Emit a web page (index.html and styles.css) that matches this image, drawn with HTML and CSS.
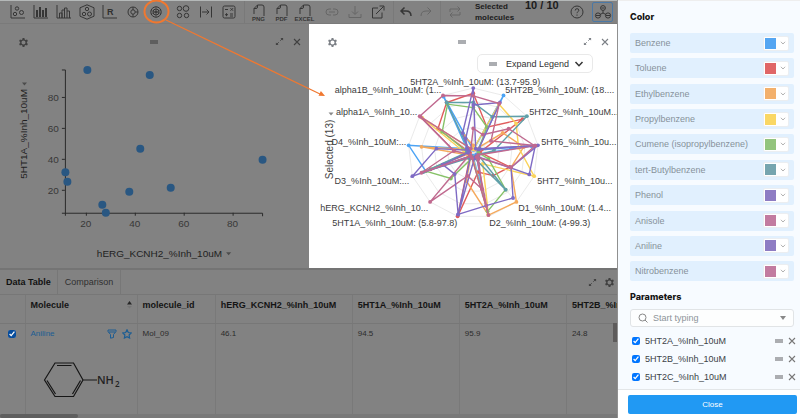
FILE: index.html
```html
<!DOCTYPE html>
<html lang="en">
<head>
<meta charset="utf-8">
<title>Molecule analysis</title>
<link rel="stylesheet" href="styles.css">
</head>
<body>
<svg class="defs" width="0" height="0" aria-hidden="true">
  <symbol id="gear" viewBox="0 0 12 12"><path fill-rule="evenodd" fill="currentColor" d="M4.800 0h2.400l.4 1.900 1.200.7 1.900-.6 1.200 2-1.400 1.300v1.400l1.400 1.300-1.200 2-1.900-.6-1.200.7-.4 1.900H4.800l-.4-1.900-1.200-.7-1.900.6-1.200-2 1.400-1.300V5.300L.1 4l1.200-2 1.900.6 1.200-.7zM6 3.300a2.700 2.700 0 1 0 0 5.400 2.700 2.700 0 1 0 0-5.400z"/></symbol>
  <symbol id="expand" viewBox="0 0 10 10"><path d="M5.800 4.200L8.500 1.500M4.200 5.800L1.500 8.500" stroke="currentColor" stroke-width="1"/><path d="M6 1h3v3zM1 6v3h3z" fill="currentColor"/></symbol>
  <symbol id="close" viewBox="0 0 10 10"><path d="M2 2l6 6M8 2L2 8" stroke="currentColor" stroke-width="1.100"/></symbol>
  <symbol id="chevron" viewBox="0 0 10 10"><path d="M1.500 3L5 6.700 8.500 3" fill="none" stroke="currentColor" stroke-width="1.500"/></symbol>
  <symbol id="file" viewBox="0 0 22 12"><path d="M6 10V4.500L9.500 1H14q2 0 2 2v9M9.500 1v2q0 1.500-1.500 1.500H6" fill="none" stroke="currentColor"/></symbol>
</svg>
<div class="app">
  <main class="workspace">
    <header class="toolbar">
      <button class="tool" aria-label="Scatter plot"><svg width="18" height="16" viewBox="0 0 18 16"><path d="M2 1v13h14"/><circle cx="6" cy="10" r="1.700"/><circle cx="8" cy="4.500" r="1.700"/><circle cx="12.500" cy="8.500" r="2"/></svg></button>
      <button class="tool" aria-label="Bar chart"><svg width="18" height="16" viewBox="0 0 18 16"><path d="M2 1v13h14"/><path d="M5 13V6M8 13V3M11 13V6M14 13V4" stroke-width="2"/></svg></button>
      <button class="tool" aria-label="Histogram"><svg width="18" height="16" viewBox="0 0 18 16"><path d="M2 1v13h14M4.500 14V9h2.500v5M7 14V6h2.500v8M9.500 6V4H12v10M12 7h2.500v7"/></svg></button>
      <button class="tool" aria-label="Hexagonal plot"><svg width="18" height="16" viewBox="0 0 18 16"><path d="M9 .8l7 3v8.400l-7 3-7-3V3.800z"/><circle cx="9" cy="5" r="1.700"/><circle cx="6" cy="10" r="1.700"/><circle cx="11.500" cy="10" r="2"/></svg></button>
      <button class="tool" aria-label="R group"><svg width="18" height="16" viewBox="0 0 18 16"><path d="M2 1v13h14"/><text x="6" y="11" class="r-glyph">R</text></svg></button>
      <button class="tool" aria-label="Donut chart"><svg width="16" height="16" viewBox="0 0 16 16"><circle cx="8" cy="8" r="5"/><circle cx="8" cy="8" r="2.200"/><path d="M8 3v3M8 10v3M10.200 8H13"/></svg></button>
      <button class="tool" aria-label="Radar chart"><svg width="16" height="16" viewBox="0 0 16 16"><circle cx="8" cy="8" r="5.200"/><circle cx="8" cy="8" r="3"/><circle cx="8" cy="8" r="1"/><path d="M8 2.500v11M2.800 6.500l10.400 3M2.800 10l10.400-4" stroke-width=".5"/></svg></button>
      <button class="tool after-gap" aria-label="Clusters"><svg width="16" height="16" viewBox="0 0 16 16"><circle cx="4.500" cy="4.500" r="2.200"/><circle cx="11" cy="4.500" r="2.800"/><circle cx="4.500" cy="11.500" r="2.200"/><circle cx="11.500" cy="11.500" r="2.200"/></svg></button>
      <button class="tool" aria-label="Fit width"><svg width="16" height="16" viewBox="0 0 16 16"><path d="M2.500 2.500v11M13.500 2.500v11M4 8h7M8.500 5.500L11 8l-2.500 2.500"/></svg></button>
      <button class="tool" aria-label="Calculator"><svg width="16" height="16" viewBox="0 0 16 16"><rect x="2" y="2" width="12" height="12" rx="1.500"/><path d="M4 5.500h3M9.500 4.200l2.500 2.500M12 4.200L9.500 6.700M4 10.700h3M5.500 9.200v3M9 10h3M9 12h3"/></svg></button>
      <span class="divider"></span>
      <button class="tool export"><svg width="22" height="12"><use href="#file"/></svg><span>PNG</span></button>
      <button class="tool export"><svg width="22" height="12"><use href="#file"/></svg><span>PDF</span></button>
      <button class="tool export"><svg width="22" height="12"><use href="#file"/></svg><span>EXCEL</span></button>
      <button class="tool muted after-gap" aria-label="Link"><svg width="16" height="16" viewBox="0 0 16 16"><path d="M7 5H5a3 3 0 0 0 0 6h2M9 5h2a3 3 0 0 1 0 6H9M5 8h6"/></svg></button>
      <button class="tool muted" aria-label="Download"><svg width="16" height="16" viewBox="0 0 16 16"><path d="M2 10v3.500h12V10M8 2v8M5 7.500L8 10.500l3-3"/></svg></button>
      <button class="tool" aria-label="Open in new window"><svg width="16" height="16" viewBox="0 0 16 16"><path d="M8 4H2.500v10H12V8.500M6 10l7.500-7.500M9.500 2H14v4.500"/></svg></button>
      <span class="divider"></span>
      <button class="tool narrow" aria-label="Undo"><svg width="14" height="16" viewBox="0 0 14 16"><path d="M12 12q0-5-5-5H2.500M5.500 3.500L2 7l3.500 3.500" stroke-width="1.500"/></svg></button>
      <button class="tool narrow muted" aria-label="Redo"><svg width="14" height="16" viewBox="0 0 14 16"><path d="M2 12q0-5 5-5h4.500M8.500 3.500L12 7l-3.500 3.500"/></svg></button>
      <span class="divider"></span>
      <button class="tool muted" aria-label="Reset"><svg width="14" height="16" viewBox="0 0 14 16"><path d="M2 8V5h10M9.500 2.500L12 5 9.500 7.500M12 8v3H2M4.500 8.500L2 11l2.500 2.500"/></svg></button>
      <div class="selection"><span class="selection-label">Selected molecules</span><strong>10 / 10</strong></div>
      <button class="tool" aria-label="Help"><svg width="14" height="14" viewBox="0 0 14 14"><circle cx="7" cy="7" r="6"/><path d="M5.200 5.500q0-1.800 1.800-1.800t1.800 1.600q0 1-1 1.500-.8.400-.8 1.400M7 9.500v1.200"/></svg></button>
      <button class="tool boxed" aria-label="Molecule colors"><svg width="18" height="16" viewBox="0 0 18 16"><circle cx="9" cy="4" r="2.400"/><circle cx="4" cy="11.500" r="2.600"/><circle cx="14" cy="11.500" r="2.600"/><path d="M9 6.500V9l-3 1.500M9 9l3 1.500M7.500 4h3M2 11.500h4M12 11.500h4"/></svg></button>
    </header>

    <div class="plots">
      <section class="panel">
        <div class="panel-bar">
          <button class="icon" aria-label="Settings"><svg width="9" height="9"><use href="#gear"/></svg></button>
          <span class="grip"></span>
          <span class="bar-end"><button class="icon" aria-label="Expand"><svg width="9" height="9"><use href="#expand"/></svg></button><button class="icon" aria-label="Close"><svg width="10" height="10"><use href="#close"/></svg></button></span>
        </div>
        <svg class="chart" viewBox="0 60 309 208">
          <g class="axis"><path d="M62 70h3.500V216M62 213.500H263v3M62 97.500h3M62 128.500h3M62 159.500h3M62 190.500h3M86.500 213v3M135.500 213v3M184.500 213v3M233.500 213v3"/></g>
          <g class="ticks y"><text x="59" y="101">80</text><text x="59" y="132">60</text><text x="59" y="163">40</text><text x="59" y="194">20</text></g>
          <g class="ticks x"><text x="86" y="227">20</text><text x="135" y="227">40</text><text x="184" y="227">60</text><text x="233" y="227">80</text></g>
          <g class="dots"><circle cx="87.500" cy="70" r="4"/><circle cx="150" cy="75" r="4"/><circle cx="140.500" cy="149" r="4"/><circle cx="263" cy="160" r="4"/><circle cx="65.500" cy="172.500" r="4"/><circle cx="67.500" cy="182" r="4"/><circle cx="129.500" cy="192" r="4"/><circle cx="171" cy="188" r="4"/><circle cx="102.500" cy="205" r="4"/><circle cx="106" cy="213" r="4"/></g>
          <text class="axis-name" x="97" y="257">hERG_KCNH2_%Inh_10uM</text><path class="caret" d="M226.500 252.500h5l-2.500 3z"/>
          <text class="axis-name" transform="translate(27 179) rotate(-90)">5HT1A_%Inh_10uM</text><path class="caret" d="M22 82.500h5l-2.500 3z"/>
        </svg>
      </section>

      <section class="panel radar">
        <div class="panel-bar">
          <button class="icon" aria-label="Settings"><svg width="9" height="9"><use href="#gear"/></svg></button>
          <span class="grip"></span>
          <span class="bar-end"><button class="icon" aria-label="Expand"><svg width="9" height="9"><use href="#expand"/></svg></button><button class="icon" aria-label="Close"><svg width="10" height="10"><use href="#close"/></svg></button></span>
        </div>
        <svg class="chart" viewBox="309 60 308 208">
          <g id="grid" class="grid"></g>
          <g id="series"></g>
          <g class="labels">
            <text x="410" y="85">5HT2A_%Inh_10uM: (13.7-95.9)</text>
            <text x="505" y="93">5HT2B_%Inh_10uM: (18....</text>
            <text x="529" y="115">5HT2C_%Inh_10uM...</text>
            <text x="541" y="145">5HT6_%Inh_10u...</text>
            <text x="537" y="184">5HT7_%Inh_10u...</text>
            <text x="518" y="211">D1_%Inh_10uM: (1.4...</text>
            <text x="489" y="226">D2_%Inh_10uM: (4-99.3)</text>
            <g class="left">
              <text x="457" y="226">5HT1A_%Inh_10uM: (5.8-97.8)</text>
              <text x="428" y="211">hERG_KCNH2_%Inh_10...</text>
              <text x="409" y="184">D3_%Inh_10uM:...</text>
              <text x="406" y="145">D4_%Inh_10uM:...</text>
              <text x="417" y="115">alpha1A_%Inh_10...</text>
              <text x="441" y="93">alpha1B_%Inh_10uM: (1...</text>
            </g>
          </g>
          <text class="axis-name" transform="translate(333 179) rotate(-90)">Selected (13)</text><path class="caret" d="M328.500 112.500h5l-2.500 3z"/>
        </svg>
        <button class="legend"><span class="grip"></span>Expand Legend<svg width="10" height="10"><use href="#chevron"/></svg></button>
      </section>
    </div>

    <section class="data">
      <div class="tabs">
        <button class="tab active">Data Table</button><button class="tab">Comparison</button>
        <span class="bar-end"><button class="icon" aria-label="Expand"><svg width="9" height="9"><use href="#expand"/></svg></button><button class="icon" aria-label="Settings"><svg width="9" height="9"><use href="#gear"/></svg></button></span>
      </div>
      <div class="table-wrap">
        <table>
          <colgroup><col class="c-check"><col class="c-mol"><col class="c-id"><col class="c-herg"><col class="c-val"><col class="c-val"><col class="c-val"></colgroup>
          <thead><tr><th></th><th><span class="cell-row">Molecule<svg width="5" height="8" viewBox="0 0 5 8"><path d="M0 3.500L2.500 0 5 3.500z" fill="#262626"/><path d="M0 5L2.500 7.500 5 5z" fill="#767676"/></svg></span></th><th>molecule_id</th><th>hERG_KCNH2_%Inh_10uM</th><th>5HT1A_%Inh_10uM</th><th>5HT2A_%Inh_10uM</th><th>5HT2B_%Inh_10uM</th></tr></thead>
          <tbody><tr>
            <td><input type="checkbox" checked aria-label="Select Aniline"></td>
            <td><div class="cell-row"><a href="#aniline">Aniline</a><span class="marks"><button class="icon" aria-label="Filter"><svg width="10" height="10" viewBox="0 0 10 10"><path d="M1 1h8v1.500L6.500 5.500v3l-3 .7V5.500L1 2.500zM1.500 3h7" fill="none" stroke="currentColor"/></svg></button><button class="icon" aria-label="Favorite"><svg width="10" height="10" viewBox="0 0 10 10"><path d="M5 .8l1.300 2.700 2.900.4-2.100 2.100.5 3L5 7.600 2.400 9l.5-3L.8 3.900l2.900-.4z" fill="none" stroke="currentColor" stroke-width="1.200"/></svg></button></span></div>
              <svg class="molecule" width="80" height="40" viewBox="42 358 80 40"><path d="M43.500 378L54 361h18.500L82 378l-9.500 16.500H54zM56 363.500h14.500M79.500 378.500L71.500 392M46 378.500L54.500 392M82 378h14" fill="none" stroke="#161616" stroke-width="1.200"/><text x="96" y="382">NH</text><text class="sub" x="114" y="385">2</text></svg></td>
            <td>Mol_09</td><td>46.1</td><td>94.5</td><td>95.9</td><td>24.8</td>
          </tr></tbody>
        </table>
        <span class="thumb-y"></span>
      </div>
      <div class="track-x"><span class="thumb-x"></span></div>
    </section>
  </main>

  <aside class="sidebar">
    <div class="settings">
      <h2>Color</h2>
      <ul class="colors">
        <li>Benzene<button class="picker" aria-label="Benzene color"><i class="sw blue"></i><svg width="6" height="6"><use href="#chevron"/></svg></button></li>
        <li>Toluene<button class="picker" aria-label="Toluene color"><i class="sw red"></i><svg width="6" height="6"><use href="#chevron"/></svg></button></li>
        <li>Ethylbenzene<button class="picker" aria-label="Ethylbenzene color"><i class="sw orange"></i><svg width="6" height="6"><use href="#chevron"/></svg></button></li>
        <li>Propylbenzene<button class="picker" aria-label="Propylbenzene color"><i class="sw yellow"></i><svg width="6" height="6"><use href="#chevron"/></svg></button></li>
        <li>Cumene (isopropylbenzene)<button class="picker" aria-label="Cumene color"><i class="sw green"></i><svg width="6" height="6"><use href="#chevron"/></svg></button></li>
        <li>tert-Butylbenzene<button class="picker" aria-label="tert-Butylbenzene color"><i class="sw teal"></i><svg width="6" height="6"><use href="#chevron"/></svg></button></li>
        <li>Phenol<button class="picker" aria-label="Phenol color"><i class="sw purple"></i><svg width="6" height="6"><use href="#chevron"/></svg></button></li>
        <li>Anisole<button class="picker" aria-label="Anisole color"><i class="sw pink"></i><svg width="6" height="6"><use href="#chevron"/></svg></button></li>
        <li>Aniline<button class="picker" aria-label="Aniline color"><i class="sw purple"></i><svg width="6" height="6"><use href="#chevron"/></svg></button></li>
        <li>Nitrobenzene<button class="picker" aria-label="Nitrobenzene color"><i class="sw pink"></i><svg width="6" height="6"><use href="#chevron"/></svg></button></li>
      </ul>
      <h2>Parameters</h2>
      <label class="search"><svg width="10" height="10" viewBox="0 0 10 10"><circle cx="4.500" cy="4.500" r="3.500" fill="none" stroke="currentColor"/><path d="M7 7l2.500 2.500" stroke="currentColor"/></svg><input type="text" placeholder="Start typing" aria-label="Parameter"><svg width="6" height="4" viewBox="0 0 6 4"><path d="M0 0h6L3 4z" fill="currentColor"/></svg></label>
      <ul class="params">
        <li><label><input type="checkbox" checked>5HT2A_%Inh_10uM</label><span class="grip"></span><button class="icon" aria-label="Remove 5HT2A"><svg width="10" height="10"><use href="#close"/></svg></button></li>
        <li><label><input type="checkbox" checked>5HT2B_%Inh_10uM</label><span class="grip"></span><button class="icon" aria-label="Remove 5HT2B"><svg width="10" height="10"><use href="#close"/></svg></button></li>
        <li><label><input type="checkbox" checked>5HT2C_%Inh_10uM</label><span class="grip"></span><button class="icon" aria-label="Remove 5HT2C"><svg width="10" height="10"><use href="#close"/></svg></button></li>
      </ul>
    </div>
    <footer><button class="submit">Close</button></footer>
  </aside>
  <svg class="callout" width="330" height="100" viewBox="0 0 330 100" aria-hidden="true"><ellipse cx="156.500" cy="11.500" rx="12" ry="11" fill="none" stroke="#f07830" stroke-width="2"/><path d="M166 20L320 94" stroke="#f07830" stroke-width="1.200"/><path d="M325 96l-6.500-.2 2.400-4.800z" fill="#f07830"/></svg>
</div>
<script src="radar.js"></script>
</body>
</html>
```
FILE: styles.css
```css
* { box-sizing: border-box; }
body { margin: 0; font: 9px/12px "Liberation Sans", Arial, sans-serif; color: #1c1c1c; background: #828282; }
button { margin: 0; padding: 0; border: 0; background: none; color: inherit; font: inherit; }
ul { margin: 0; padding: 0; list-style: none; }
svg { display: block; flex: none; }
.defs { position: absolute; }
.app { position: relative; display: flex; min-height: 100vh; }
.workspace { flex: 1; min-width: 0; display: flex; flex-direction: column; border-right: 1px solid #909090; }

.toolbar { display: flex; align-items: center; height: 24px; padding-left: 6px; border-top: 1px solid #b4b8b8; border-bottom: 1px solid #7a7a7a; background: #828282; }
.tool { display: flex; align-items: center; justify-content: center; width: 23px; height: 22px; color: #363636; }
.tool svg { fill: none; stroke: currentColor; }
.tool .r-glyph { font-size: 9px; font-weight: bold; fill: #303030; stroke: none; }
.tool.after-gap { margin-left: 4px; }
.tool.narrow { width: 20px; }
.tool.muted { color: #666; }
.divider { width: 1px; height: 22px; margin: 0 2px 0 4px; background: #797979; }
.tool.export { flex-direction: column; justify-content: flex-start; padding-top: 3px; font-size: 6px; font-weight: bold; line-height: 6px; }
.selection { display: flex; flex: 1; align-items: flex-start; gap: 8px; height: 22px; margin-left: 9px; font-size: 8px; line-height: 11px; font-weight: bold; }
.selection-label { width: 42px; }
.selection strong { font-size: 11px; line-height: 8px; white-space: nowrap; }
.tool.boxed { width: 21px; height: 20px; margin: 0 4px; border: 1px solid #4b78a5; border-radius: 2px; }

.plots { display: grid; grid-template-columns: 1fr 1fr; }
.panel { position: relative; color: #404040; }
.panel-bar { display: grid; grid-template-columns: 1fr auto 1fr; align-items: center; height: 36px; padding: 0 7px 0 19px; }
.bar-end { display: flex; justify-content: flex-end; gap: 8px; }
.icon { display: flex; flex: none; }
.grip { width: 8px; height: 4px; background: #5e5e5e; }
.radar .grip, .params .grip { background: #abadb1; }
.panel-bar > .icon { justify-self: start; }
.panel-bar .grip { margin-right: 13px; }
.chart { width: 100%; height: auto; }
.axis path { fill: none; stroke: #2a2a2a; stroke-width: 1; }
.ticks { font-size: 10px; fill: #383838; }
.ticks.y { text-anchor: end; }
.ticks.x { text-anchor: middle; }
.dots { fill: #295782; }
.axis-name { font-size: 10px; fill: #1f1f1f; }
.caret { fill: #4c4c4c; }
.radar { background: #fff; color: #7b7f85; }
.radar .axis-name { fill: #444; }
.radar .caret { fill: #888; }
.labels { font-size: 9px; fill: #3c3c3c; }
.left { text-anchor: end; }
.grid { fill: none; stroke: #e5e5e5; stroke-width: .8; }
.legend { position: absolute; top: 30px; right: 24px; display: flex; align-items: center; gap: 9px; height: 19px; padding: 0 8px 0 11px; border: 1px solid #e9e9e9; border-radius: 5px; background: #fff; color: #333; }
.legend svg { margin-left: -4px; }

.data { flex: 1; display: flex; flex-direction: column; border-top: 2px solid #747474; }
.tabs { display: flex; align-items: center; height: 25px; border-bottom: 1px solid #777; color: #404040; }
.tabs .bar-end { flex: 1; padding-right: 3px; }
.tab { height: 100%; padding: 0 7px; border-right: 1px solid #777; color: #303030; }
.tab.active { padding: 0 6px; color: #111; font-weight: bold; }
.table-wrap { position: relative; flex: 1; overflow: hidden; }
table { width: 674px; table-layout: fixed; border-collapse: collapse; }
.c-check { width: 25px; }
.c-mol { width: 112px; }
.c-id { width: 78px; }
.c-herg { width: 137px; }
.c-val { width: 107px; }
th, td { padding: 4px 5px; border-right: 1px solid #797979; text-align: left; vertical-align: top; }
th { height: 28px; border-bottom: 1px solid #777; color: #141414; }
td { height: 91px; font-size: 8px; color: #2c2c2c; }
td:first-child { padding: 6px 8px; }
td input { display: block; width: 8px; height: 8px; margin: 0; accent-color: #064c9c; }
.cell-row { display: flex; align-items: center; justify-content: space-between; }
td a { color: #1c5d93; text-decoration: none; }
.marks { display: flex; gap: 5px; color: #1c5d93; }
.molecule { margin: 20px 0 0 12px; font: 600 11px "Open Sans", sans-serif; fill: #222; }
.molecule .sub { font-size: 8px; }
.thumb-y { position: absolute; top: 28px; right: 0; width: 4px; height: 19px; background: #5d5b5b; }
.track-x { height: 5px; background: #797979; }
.thumb-x { display: block; width: 78px; height: 4px; border-radius: 2px; background: #5f5f5f; }

.sidebar { display: flex; flex-direction: column; width: 182px; background: #f7fbff; border-top: 1px solid #eee; }
.settings { flex: 1; display: flex; flex-direction: column; padding: 10px 6px 3px 12px; }
h2 { margin: 0; font: 800 9px/12px Inter, sans-serif; color: #151515; }
.colors { flex: 1; display: flex; flex-direction: column; justify-content: space-between; margin: 10px 0; }
.colors li { display: flex; align-items: center; justify-content: space-between; height: 20px; padding: 0 5px; border-radius: 2px; background: #e1f0fe; color: #87929b; }
.picker { display: flex; align-items: center; gap: 4px; height: 15px; padding: 0 2px 0 1px; border: 1px solid #ebeef1; border-radius: 2px; background: #fff; color: #aaa; }
.sw { width: 11px; height: 11px; }
.blue { background: #55a6f2; }
.red { background: #e06666; }
.orange { background: #f3b06b; }
.yellow { background: #fad764; }
.green { background: #93c47d; }
.teal { background: #76a5af; }
.purple { background: #8e7cc3; }
.pink { background: #c27ba0; }
.search { display: flex; align-items: center; gap: 5px; height: 18px; margin-top: 6px; padding: 0 7px; border: 1px solid #e1e4e6; border-radius: 3px; background: #fdfefe; color: #888; }
.search input { flex: 1; min-width: 0; padding: 0; border: 0; outline: 0; background: none; font: inherit; }
.search input::placeholder { color: #8d9499; }
.params { padding: 5px 0 0 2px; }
.params li { display: flex; align-items: center; gap: 4px; height: 18px; margin-right: -3px; color: #777; }
.params label { display: flex; flex: 1; align-items: center; gap: 5px; color: #3c4247; }
.params input { width: 8px; height: 8px; margin: 0; accent-color: #0075ff; }
footer { padding: 5px 3px 5px 10px; border-top: 1px solid #e3e6e8; background: #fff; }
.submit { display: block; width: 100%; height: 19px; border-radius: 2px; background: #2199f3; color: #fff; font-size: 8px; }
.callout { position: absolute; top: 0; left: 0; pointer-events: none; }
```
FILE: radar.js
```js
const NS = "http://www.w3.org/2000/svg";
const CX = 473, CY = 153, R = 65, AXES = 13;

// Relative inhibition per axis, clockwise from 5HT2A.
const series = [
  ["#4ba3f5", [5, 100, 8, 90, 5, 8, 66, 4, 6, 78, 100, 12, 98]],
  ["#e05c5c", [92, 45, 92, 10, 60, 46, 30, 100, 8, 70, 5, 66, 88]],
  ["#f5a95c", [12, 6, 55, 78, 62, 100, 98, 44, 6, 8, 80, 10, 30]],
  ["#fad35a", [6, 85, 80, 70, 100, 22, 97, 6, 10, 8, 14, 95, 8]],
  ["#86c267", [70, 45, 10, 8, 25, 75, 92, 8, 52, 78, 8, 58, 85]],
  ["#5f9fa8", [78, 63, 100, 32, 8, 75, 8, 6, 10, 82, 10, 8, 88]],
  ["#7f6bc4", [100, 8, 12, 96, 92, 6, 8, 97, 6, 100, 57, 8, 35]],
  ["#c0698f", [38, 32, 66, 95, 8, 12, 57, 36, 100, 6, 30, 98, 8]],
  ["#7f6bc4", [74, 88, 10, 100, 62, 92, 83, 97, 43, 50, 8, 12, 25]],
  ["#c0698f", [88, 86, 33, 96, 62, 8, 98, 8, 6, 85, 30, 100, 100]]
];

function point(axis, value) {
  const a = axis * 2 * Math.PI / AXES;
  const r = value / 100 * R;
  return [(CX + r * Math.sin(a)).toFixed(1), (CY - r * Math.cos(a)).toFixed(1)];
}

function add(parent, tag, attrs) {
  const el = document.createElementNS(NS, tag);
  for (const k in attrs) el.setAttribute(k, attrs[k]);
  parent.appendChild(el);
}

const grid = document.getElementById("grid");
for (const level of [20, 40, 60, 80, 100]) {
  const pts = Array.from({ length: AXES }, (_, i) => point(i, level));
  add(grid, "polygon", { points: pts.join(" ") });
}
for (let i = 0; i < AXES; i++) {
  const [x, y] = point(i, 100);
  add(grid, "path", { d: `M${CX} ${CY}L${x} ${y}` });
}

const layer = document.getElementById("series");
for (const [color, values] of series) {
  const pts = values.map((v, i) => point(i, v));
  add(layer, "polygon", { points: pts.join(" "), fill: "none", stroke: color, "stroke-width": 1.4 });
  for (const [x, y] of pts) add(layer, "circle", { cx: x, cy: y, r: 1.9, fill: color });
}
```
